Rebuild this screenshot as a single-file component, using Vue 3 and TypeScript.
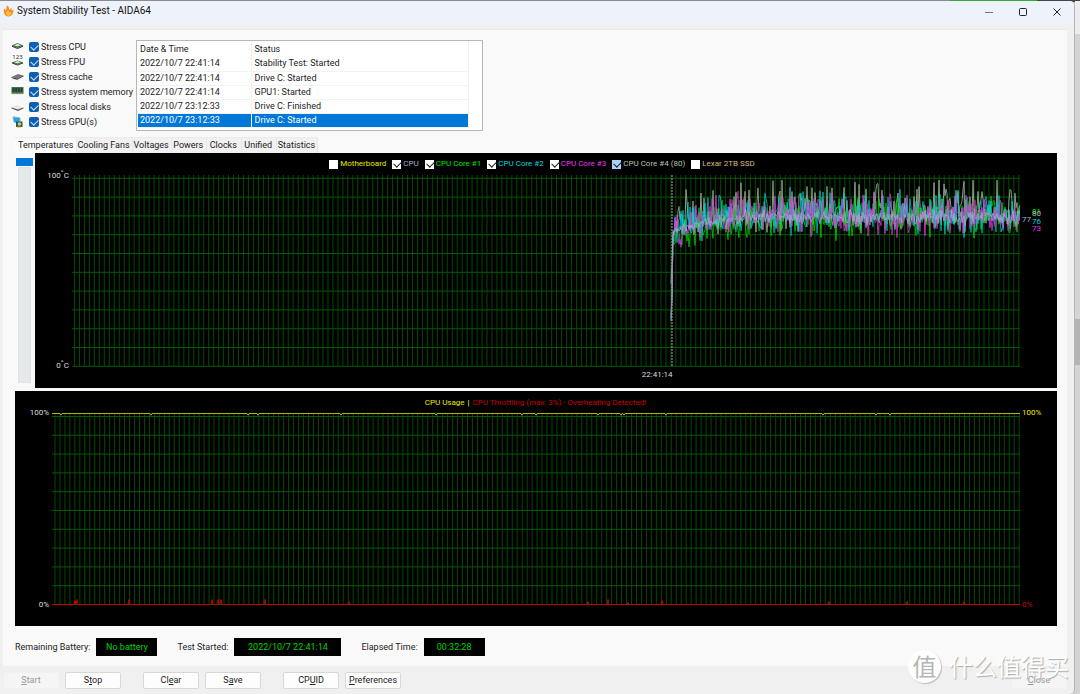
<script setup lang="ts">
import { ref } from 'vue'

interface StressOption { label: string; icon: string; checked: boolean }
interface Sensor { name: string; color: string; checked: boolean; hot?: boolean }

const stress = ref<StressOption[]>([
  { label: 'Stress CPU', icon: 'cpu', checked: true },
  { label: 'Stress FPU', icon: 'fpu', checked: true },
  { label: 'Stress cache', icon: 'cache', checked: true },
  { label: 'Stress system memory', icon: 'memory', checked: true },
  { label: 'Stress local disks', icon: 'disk', checked: true },
  { label: 'Stress GPU(s)', icon: 'gpu', checked: true },
])

const events = [
  ['2022/10/7 22:41:14', 'Stability Test: Started'],
  ['2022/10/7 22:41:14', 'Drive C: Started'],
  ['2022/10/7 22:41:14', 'GPU1: Started'],
  ['2022/10/7 23:12:33', 'Drive C: Finished'],
  ['2022/10/7 23:12:33', 'Drive C: Started'],
]

const tabs = ['Temperatures', 'Cooling Fans', 'Voltages', 'Powers', 'Clocks', 'Unified', 'Statistics']
const activeTab = ref('Temperatures')

const sensors = ref<Sensor[]>([
  { name: 'Motherboard', color: 'yellow', checked: false },
  { name: 'CPU', color: 'slate', checked: true },
  { name: 'CPU Core #1', color: 'green', checked: true },
  { name: 'CPU Core #2', color: 'cyan', checked: true },
  { name: 'CPU Core #3', color: 'magenta', checked: true },
  { name: 'CPU Core #4 (80)', color: 'sage', checked: true, hot: true },
  { name: 'Lexar 2TB SSD', color: 'tan', checked: false },
])

const STEP = 4.97
function verticals(start: number, width: number, top: number, bottom: number): string {
  let d = ''
  for (let x = start; x < width; x += STEP) d += `M${x.toFixed(2)} ${top}V${bottom}`
  return d
}
function horizontals(top: number, width: number): string {
  let d = ''
  for (let i = 0; i <= 10; i++) d += `M0 ${(top + i * 18.8).toFixed(1)}H${width}`
  return d
}

// Temperature plot: 948 x 192 units, 0 to 100 degrees
const TEMP_TOP = 3.3
const tempY = (t: number) => TEMP_TOP + (100 - t) * 1.88
const START_X = 600

function noise(seed: number): () => number {
  let s = seed
  return () => {
    s = (s * 1664525 + 1013904223) % 4294967296
    return s / 4294967296
  }
}

function series(seed: number, centre: number, up: number, down: number, low: number): string {
  const rnd = noise(seed)
  let d = `M${START_X - 1} ${tempY(low).toFixed(1)}L${START_X} ${tempY(low + 12).toFixed(1)}L${START_X + 1} ${tempY(centre - 10).toFixed(1)}`
  for (let x = START_X + 2; x <= 948; x += 1) {
    const warm = Math.max(0, 1 - (x - START_X) / 70) * 7
    const r = rnd()
    const k = Math.pow(rnd(), 1.7)
    const t = centre - warm + (r > 0.5 ? k * up : -k * down) + (rnd() - 0.5) * 6
    d += `L${x} ${tempY(Math.min(99, t)).toFixed(1)}`
  }
  return d
}

const traces = [
  { color: 'sage', d: series(91, 82, 17, 9, 24) },
  { color: 'green', d: series(17, 79, 10, 10, 27) },
  { color: 'cyan', d: series(29, 80, 13, 9, 25) },
  { color: 'magenta', d: series(53, 80, 13, 9, 26) },
  { color: 'slate', d: series(77, 79, 2, 2, 44) },
]

const readings = [
  { value: 81, color: 'green', temp: 82, outer: true },
  { value: 80, color: 'sage', temp: 81, outer: true },
  { value: 77, color: 'slate', temp: 78, outer: false },
  { value: 76, color: 'cyan', temp: 77, outer: true },
  { value: 73, color: 'magenta', temp: 73, outer: true },
]
const readingTop = (t: number) => ({ top: `${(tempY(t) / 192) * 100}%` })

// Usage plot: 968 x 194 units
const dips = [9, 99, 196, 206, 289, 384, 470, 484, 546, 569, 572, 614, 771, 824, 838]
const usage = 'M0 1.5' + dips.map((x) => `H${x - 1}L${x} 3.2L${x + 1} 1.5`).join('') + 'H968'
const bursts: [number, number][] = [
  [23, 4], [25, 5], [77, 5], [160, 5], [166, 5], [169, 5], [213, 5], [297, 3],
  [536, 3], [556, 5], [576, 2], [610, 4], [777, 3], [855, 3], [912, 3],
]
const throttling = 'M0 192.5' + bursts.map(([x, h]) => `H${x - 1}L${x} ${192.5 - h}L${x + 1} 192.5`).join('') + 'H968'

const status = [
  { label: 'Remaining Battery:', value: 'No battery', size: 'short' },
  { label: 'Test Started:', value: '2022/10/7 22:41:14', size: 'long' },
  { label: 'Elapsed Time:', value: '00:32:28', size: 'short' },
]

const actions = [
  [{ pre: '', key: 'S', post: 'tart', off: true }, { pre: 'S', key: 't', post: 'op', off: false }],
  [{ pre: 'Cl', key: 'e', post: 'ar', off: false }, { pre: 'S', key: 'a', post: 've', off: false }],
  [{ pre: 'CP', key: 'U', post: 'ID', off: false }, { pre: '', key: 'P', post: 'references', off: false }],
]
</script>

<template>
  <div class="desktop">
    <main class="window">
      <header class="titlebar">
        <svg class="flame" viewBox="0 0 11 12">
          <path fill="#f58a1f" d="M1 3.5C2 4 2.600 5 2.700 6C3.500 4.500 3.400 2.500 4 0.500C5.800 1.500 6.300 3 6.200 5C7.400 4.500 7.700 3.500 8.500 2.500C8.700 4 8.600 4.800 8.800 5.500L10.600 4.800C10.300 8.500 9 11.500 5.500 11.500C2 11.500 0.200 8 1 3.500Z" />
          <path fill="#ffc43b" d="M3 7C4.200 7.200 4.600 6 4.800 4.500C6 6 6 7 6.500 7.500L8.500 6.500C8.400 9 7.500 10.800 5.500 10.800C3.700 10.800 2.800 9 3 7Z" />
        </svg>
        <h1>System Stability Test - AIDA64</h1>
        <div class="controls">
          <button type="button" aria-label="Minimize"><svg viewBox="0 0 10 10"><path class="thin" d="M1 5.500H9" /></svg></button>
          <button type="button" aria-label="Maximize"><svg viewBox="0 0 10 10"><rect x="1.500" y="1.500" width="7" height="7" rx="1" /></svg></button>
          <button type="button" aria-label="Close"><svg viewBox="0 0 10 10"><path d="M1.500 1.500L8.500 8.500M8.500 1.500L1.500 8.500" /></svg></button>
        </div>
      </header>

      <section class="panel">
        <div class="top">
          <ul class="stress">
            <li v-for="s in stress" :key="s.label">
              <svg class="device" viewBox="0 0 13 12">
                <template v-if="s.icon === 'cpu'">
                  <path fill="#3c6b3c" d="M0.500 4.500L6.500 2L12.500 4.500L6.500 7Z" />
                  <path fill="#dfe5d2" d="M3 4.200L6.500 2.800L10 4.200L6.500 5.500Z" />
                  <path stroke="#243c28" fill="none" d="M1 5.300L6.500 7.500L12 5.300" />
                </template>
                <template v-else-if="s.icon === 'fpu'">
                  <path fill="#3c6b3c" d="M0.500 6.500L6.500 4.500L12.500 6.500L6.500 8.500Z" />
                  <path fill="#dfe5d2" d="M3 6.300L6.500 5L10 6.300L6.500 7.500Z" />
                  <path stroke="#243c28" fill="none" d="M1 7L6.500 9L12 7" />
                  <text x="6.500" y="3" class="digits">123</text>
                </template>
                <template v-else-if="s.icon === 'cache'">
                  <path fill="#777" d="M0.500 6L7 3L12.500 4.500L6 7.500Z" />
                  <path fill="#3a3a3a" d="M0.500 6L6 7.500L12.500 4.500V5.500L6 8.800L0.500 7Z" />
                  <path stroke="#aaa" stroke-width=".6" d="M2 7.500V8.500M4 8V9M8 7.500V8.500M10 6.500V7.500" />
                </template>
                <template v-else-if="s.icon === 'memory'">
                  <rect x="0.500" y="1" width="12" height="7" fill="#417653" />
                  <path fill="#2b3a30" d="M1.500 2H3.500V6H1.500ZM4.300 2H6.200V6H4.300ZM7 2H8.800V6H7ZM9.700 2H11.600V6H9.700Z" />
                  <path stroke="#c6b46c" stroke-dasharray="1 .5" d="M1 7.800H12" />
                </template>
                <template v-else-if="s.icon === 'disk'">
                  <path fill="#e7e7e7" d="M0.500 6L6 4L12.500 6.500L7 8.500Z" />
                  <path fill="#555" d="M0.500 6.500L7 8.500L12.500 6.500V7.500L7 10L0.500 7.500Z" />
                </template>
                <template v-else>
                  <path fill="#2f9ed8" stroke="#70b8dc" d="M2 0.800L9 2V7.500L3 6Z" />
                  <rect x="5" y="5.500" width="6.500" height="5.500" fill="#36543b" />
                  <circle cx="8.500" cy="8" r="1.800" fill="#b7c69c" />
                  <path stroke="#d1a33b" d="M6 11H10" />
                </template>
              </svg>
              <label><input v-model="s.checked" type="checkbox" class="tick blue">{{ s.label }}</label>
            </li>
          </ul>

          <div class="log">
            <table>
              <thead><tr><th>Date &amp; Time</th><th>Status</th></tr></thead>
              <tbody>
                <tr v-for="(e, i) in events" :key="i" :class="{ selected: i === events.length - 1 }">
                  <td>{{ e[0] }}</td><td>{{ e[1] }}</td>
                </tr>
              </tbody>
            </table>
          </div>
        </div>

        <nav class="tabs">
          <button v-for="t in tabs" :key="t" type="button" :class="{ active: activeTab === t }" @click="activeTab = t">{{ t }}</button>
        </nav>

        <div class="temps">
          <div class="rail"><i class="pick"></i><i class="track"></i></div>
          <div class="chart">
            <div class="legend">
              <label v-for="s in sensors" :key="s.name" :class="s.color">
                <input v-model="s.checked" type="checkbox" class="tick white" :class="{ hot: s.hot }">{{ s.name }}
              </label>
            </div>
            <div class="axis"><span>100<sup>°</sup>C</span><span>0<sup>°</sup>C</span></div>
            <div class="plot">
              <svg viewBox="0 0 948 192" preserveAspectRatio="none">
                <path class="grid" :d="verticals(2.5, 948, 0, 191)" />
                <path class="grid strong" :d="horizontals(3.3, 948)" />
                <path v-for="t in traces" :key="t.color" class="trace" :class="t.color" :d="t.d" />
                <path class="marker" d="M600 0V191" />
              </svg>
            </div>
            <div class="readings">
              <span v-for="r in readings" :key="r.value" :class="[r.color, { outer: r.outer }]" :style="readingTop(r.temp)">{{ r.value }}</span>
            </div>
            <div class="time"><span>22:41:14</span></div>
          </div>
        </div>

        <div class="chart usage">
          <div class="legend heading"><span class="yellow">CPU Usage</span><span class="bar">|</span><span class="red">CPU Throttling (max: 3%) - Overheating Detected!</span></div>
          <div class="axis"><span>100%</span><span>0%</span></div>
          <div class="plot">
            <svg viewBox="0 0 968 194" preserveAspectRatio="none">
              <path class="grid" :d="verticals(3, 968, 2, 192)" />
              <path class="grid strong" :d="horizontals(4.5, 968)" />
              <path class="line used" :d="usage" />
              <path class="line red" :d="throttling" />
            </svg>
          </div>
          <div class="axis right"><span class="yellow">100%</span><span class="red">0%</span></div>
        </div>

        <dl class="status">
          <div v-for="s in status" :key="s.label"><dt>{{ s.label }}</dt><dd :class="s.size">{{ s.value }}</dd></div>
        </dl>
      </section>

      <footer class="actions">
        <div v-for="(group, g) in actions" :key="g" class="group">
          <button v-for="a in group" :key="a.post" type="button" :disabled="a.off">{{ a.pre }}<u>{{ a.key }}</u>{{ a.post }}</button>
        </div>
        <button type="button" class="close" disabled><u>C</u>lose</button>
      </footer>
    </main>
    <aside class="edge"><i></i></aside>
    <div class="watermark"><b>值</b><span>什么值得买</span></div>
  </div>
</template>

<style>
body { margin: 0; background: #d2d2d2; }
</style>

<style scoped>
* { box-sizing: border-box; }
.desktop {
  position: relative;
  display: flex;
  min-height: 100vh;
  padding-top: 1px;
  background: linear-gradient(90deg, #8d8b90 0 88%, #36a743 88% 96%, #444 96%) top / 100% 2px no-repeat #d0d0d0;
  font: 9px/12px Roboto, "Open Sans", sans-serif;
  color: #222;
}
.window {
  flex: 1;
  min-width: 0;
  display: flex;
  flex-direction: column;
  background: #f0f0f0;
  border-right: 1px solid #b5b5b5;
  border-radius: 0 5px 5px 0;
}
.edge { width: 5px; background: linear-gradient(#ececec 0 33px, #d4d4d4 33px); display: flex; flex-direction: column; }
.edge i { height: 46px; margin-top: 318px; background: #b4b4b4; }

.titlebar { display: flex; align-items: center; height: 22px; padding: 0 0 2px 3px; background: #eef3fb; border-top-right-radius: 5px; }
.flame { width: 11px; height: 12px; margin-right: 3px; }
h1 { margin: 0; font-size: 10px; font-weight: 400; color: #111; }
.controls { margin-left: auto; display: flex; }
.controls button { width: 34px; height: 20px; padding: 0; border: 0; background: none; }
.controls svg { width: 10px; height: 10px; fill: none; stroke: #222; stroke-width: 1; vertical-align: middle; }
.controls .thin { stroke: #777; }

.panel {
  flex: 1;
  display: flex;
  flex-direction: column;
  margin: 6px 7px 0 3px;
  padding: 10px 10px 10px 12px;
  background: #f9f9f9;
  border-top: 1px solid #eaeaea;
}
.top { display: flex; align-items: flex-start; margin-left: -4px; }
.stress { list-style: none; width: 125px; margin: -1px 0 0; padding: 0; white-space: nowrap; }
.stress li { display: flex; align-items: center; height: 15px; }
.device { width: 13px; height: 12px; margin-right: 5px; overflow: visible; }
.digits { font: 6px "Open Sans", sans-serif; text-anchor: middle; fill: #222; }
label { display: flex; align-items: center; }
.tick { appearance: none; position: relative; flex: none; width: 10px; height: 10px; margin: 0 2px 0 0; }
.tick.blue { background: #0a5fb4; border-radius: 2px; }
.tick.white { width: 9px; height: 9px; background: #fff; }
.tick.white.hot { background: #a9d0f5; }
.tick:checked::after {
  content: "";
  position: absolute;
  left: 2px;
  top: 2px;
  width: 6px;
  height: 4px;
  border: solid #cfe2f5;
  border-width: 0 0 1px 1px;
  transform: rotate(-45deg);
}
.tick.white:checked::after { left: 2px; top: 1px; border-color: #222; }

.log { width: 347px; height: 91px; border: 1px solid #b4b8be; background: #fff; }
table { width: 331px; border-collapse: collapse; table-layout: fixed; margin-left: 1px; }
th, td { height: 14px; padding: 0 2px; font-weight: 400; text-align: left; border-right: 1px solid #f0f0f0; border-bottom: 1px solid #f2f2f2; line-height: 13px; }
th { height: 16px; border-bottom: 0; }
th:first-child { width: 113px; }
td:nth-child(2), th:nth-child(2) { padding-left: 3px; }
.selected td { background: #0078d7; color: #fff; }

.tabs { display: flex; height: 16px; margin-top: 6px; }
.tabs button {
  min-width: 35px;
  padding: 0 2px 2px 1px;
  border: 0;
  border-right: 1px solid #e8e8e8;
  border-top: 1px solid #ebebeb;
  background: #f1f1f1;
  font: inherit;
  color: #222;
}
.tabs .active { background: #fbfbfb; padding-left: 3px; }

.temps { flex: 1 1 234px; display: flex; }
.rail { width: 20px; padding: 5px 2px 5px 1px; display: flex; flex-direction: column; }
.pick { height: 8px; background: #0078d7; }
.track { flex: 1; margin: 1px 2px 0; background: #e5e9ea; border: 1px solid #dfe3e4; }

.chart {
  flex: 1;
  min-width: 0;
  display: grid;
  grid-template: 22px minmax(190px, 1fr) 21px / 37px minmax(0, 1fr) 37px;
  background: #000;
  color: #ddd;
  font-size: 8px;
  line-height: 10px;
}
.usage { flex: 1 1 234px; margin-top: 3px; grid-template-rows: 21px minmax(190px, 1fr) 20px; }
.legend { grid-column: 1 / 4; display: flex; justify-content: center; align-items: center; gap: 6px; padding-right: 8px; white-space: nowrap; }
.heading { gap: 3px; padding: 2px 1px 0 0; }
.bar { color: #ff8; }
.axis { display: flex; flex-direction: column; justify-content: space-between; align-items: flex-end; padding-right: 3px; margin: -4px 0; }
.axis.right { align-items: flex-start; padding-left: 2px; }
sup { font-size: 8px; line-height: 0; vertical-align: 3px; }
.plot svg { display: block; width: 100%; height: 0; min-height: 100%; }
.plot path { fill: none; vector-effect: non-scaling-stroke; }
.grid { stroke: #004a00; }
.grid.strong { stroke: #005a00; }
.trace { stroke: currentColor; opacity: .76; }
.line { stroke: currentColor; }
.used { color: #b4b400; }
.plot .marker { stroke: #aaa; stroke-dasharray: 2 1; }
.readings { position: relative; }
.readings span { position: absolute; left: 2px; transform: translateY(-50%); font-size: 8px; }
.readings .outer { left: 12px; }
.time { grid-column: 2; display: flex; padding: 3px 0 0 60.1%; }

.yellow { color: #e8e800; }
.slate { color: #a3afd2; }
.green { color: #00e000; }
.cyan { color: #00d4dc; }
.magenta { color: #e838e8; }
.sage { color: #b4c4b4; }
.tan { color: #dcb880; }
.red { color: #c80000; }

.status { display: flex; margin: 12px 0 0; gap: 20px; }
.status div { display: flex; align-items: center; gap: 6px; }
dt { white-space: nowrap; }
dd { margin: 0; padding: 3px 0; width: 61px; text-align: center; background: #000; color: #00d000; }
dd.long { width: 107px; }

.actions { display: flex; align-items: center; gap: 22px; height: 28px; padding: 0 7px 0 3px; }
.group { display: flex; gap: 6px; }
.actions button {
  width: 56px;
  height: 17px;
  padding: 0;
  border: 1px solid #d8d8d8;
  border-radius: 2px;
  background: #fdfdfd;
  font: inherit;
  color: #222;
}
.actions button:disabled { background: #f5f5f5; border-color: #f2f2f2; color: #999; }
.actions .close { margin-left: auto; }

.watermark {
  position: absolute;
  right: 11px;
  bottom: 11px;
  display: flex;
  align-items: center;
  gap: 8px;
  font: 24px/34px "Noto Sans CJK SC", sans-serif;
  color: #fff;
  text-shadow: 1px 1px 1px #aaa;
  pointer-events: none;
}
.watermark b { width: 33px; height: 33px; border-radius: 50%; background: #fff; color: #b5b5b5; text-align: center; font-weight: 400; line-height: 32px; box-shadow: 1px 1px 1px #bbb; text-shadow: none; }
</style>
